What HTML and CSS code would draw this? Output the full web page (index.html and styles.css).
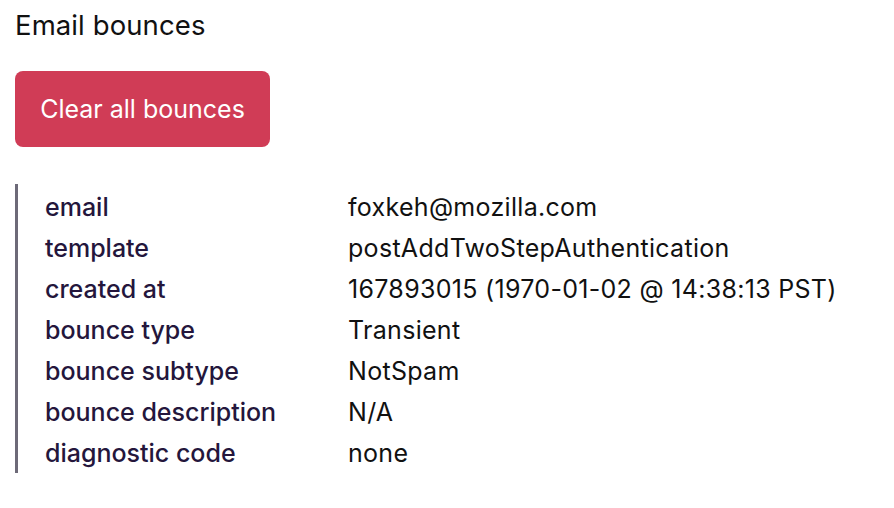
FILE: index.html
```html
<!DOCTYPE html>
<html>
<head>
<meta charset="utf-8">
<link rel="stylesheet" href="styles.css">
</head>
<body>
<main class="page">
  <h2 class="title">Email bounces</h2>
  <button class="btn-danger">Clear all bounces</button>
  <dl class="bounce">
    <div class="row"><dt>email</dt><dd>foxkeh@mozilla.com</dd></div>
    <div class="row"><dt>template</dt><dd>postAddTwoStepAuthentication</dd></div>
    <div class="row"><dt>created at</dt><dd>167893015 (1970-01-02 @ 14:38:13 PST)</dd></div>
    <div class="row"><dt>bounce type</dt><dd>Transient</dd></div>
    <div class="row"><dt>bounce subtype</dt><dd>NotSpam</dd></div>
    <div class="row"><dt>bounce description</dt><dd>N/A</dd></div>
    <div class="row"><dt>diagnostic code</dt><dd>none</dd></div>
  </dl>
</main>
</body>
</html>
```
FILE: styles.css
```css
html, body { margin: 0; padding: 0; background: #fff; }
body { font-family: Inter, "Noto Sans", sans-serif; color: #000; }
.page { padding: 9px 15px; }
.title { margin: 0; font-size: 27.5px; font-weight: 400; line-height: 32px; color: #111; letter-spacing: 0.1px; }
.btn-danger {
  margin-top: 30px;
  display: block;
  width: 255px;
  height: 76px;
  padding: 0;
  border: 0;
  border-radius: 8px;
  background: #d03c56;
  color: #fff;
  font-family: inherit;
  font-size: 25px;
  font-weight: 400;
}
.bounce {
  margin: 37px 0 0;
  border-left: 3px solid #6d6a78;
  padding: 2px 0 0 27px;
}
.row { display: flex; height: 41px; align-items: center; }
dt { width: 303px; color: #24163c; font-size: 25px; font-weight: 500; }
dd { margin: 0; font-size: 25px; color: #111; letter-spacing: 0.3px; }
```
